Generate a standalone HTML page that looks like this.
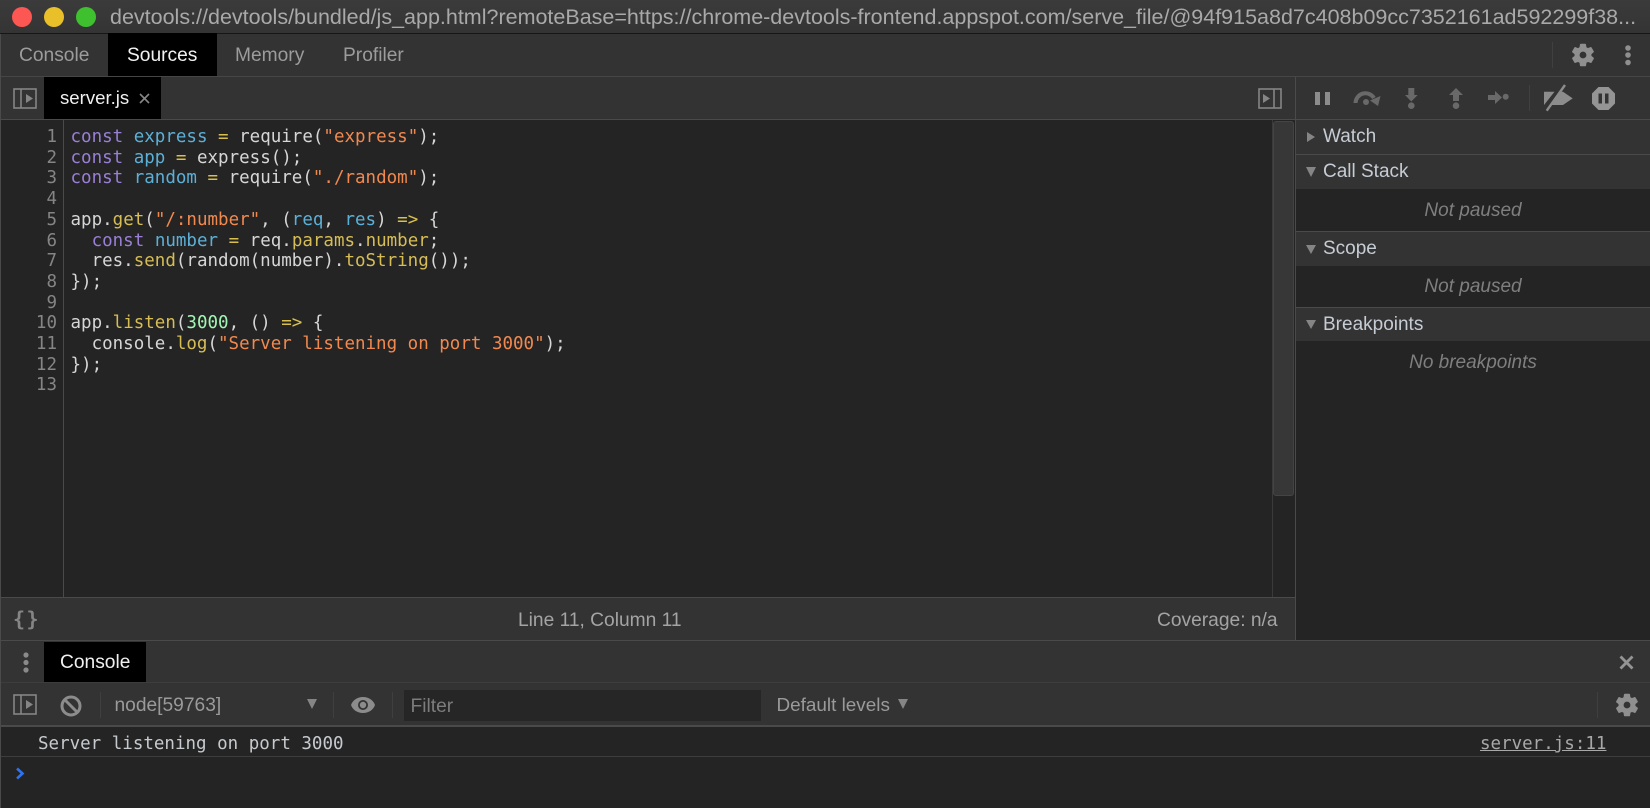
<!DOCTYPE html>
<html><head><meta charset="utf-8"><style>
html,body{margin:0;padding:0;width:1650px;height:808px;overflow:hidden;background:#242424}
body{position:relative;font-family:"Liberation Sans",sans-serif}
.a{position:absolute;white-space:pre}
.r{position:absolute}
.m{font-family:"DejaVu Sans Mono","Liberation Mono",monospace}
.h{color:#c6ccd4;font-size:19px;left:1323px;line-height:34px}
.e{color:#7f7f7f;font-size:19px;font-style:italic;left:1296px;width:354px;text-align:center;line-height:24px}
.k{color:#9a7fd6}.v{color:#5cb0d8}.o{color:#d8c04e}.s{color:#f1894f}.f{color:#d6bd55}.n{color:#a3f5b4}
#code{left:70.5px;top:127px;font-size:17.5px;line-height:20.7px;color:#d6d6d6}
#nums{left:0;width:57px;top:127px;font-size:17.5px;line-height:20.7px;color:#858585;text-align:right}
svg{position:absolute;overflow:visible}
</style></head><body>
<!-- title bar -->
<div class="r" style="left:0;top:0;width:1650px;height:33px;background:linear-gradient(#3b3b3b,#343434)"></div>
<div class="r" style="left:0;top:33px;width:1650px;height:1px;background:#161616"></div>
<div class="r" style="left:12px;top:7px;width:20px;height:20px;border-radius:50%;background:#fc5753"></div>
<div class="r" style="left:44px;top:7px;width:20px;height:20px;border-radius:50%;background:#e9c02a"></div>
<div class="r" style="left:76px;top:7px;width:20px;height:20px;border-radius:50%;background:#3fc02f"></div>
<div class="a" style="left:110px;top:3px;font-size:21.5px;line-height:28px;color:#a9a9a9;width:1530px;overflow:hidden">devtools://devtools/bundled/js_app.html?remoteBase=https://chrome-devtools-frontend.appspot.com/serve_file/@94f915a8d7c408b09cc7352161ad592299f38...</div>
<!-- main tabs -->
<div class="r" style="left:0;top:34px;width:1650px;height:42px;background:#333"></div>
<div class="r" style="left:108px;top:33px;width:109px;height:43px;background:#000"></div>
<div class="a" style="left:19px;top:44px;font-size:19.2px;line-height:24px;color:#9c9c9c">Console</div>
<div class="a" style="left:127px;top:44px;font-size:19.2px;line-height:24px;color:#f2f2f2">Sources</div>
<div class="a" style="left:235px;top:44px;font-size:19.2px;line-height:24px;color:#9c9c9c">Memory</div>
<div class="a" style="left:343px;top:44px;font-size:19.2px;line-height:24px;color:#9c9c9c">Profiler</div>
<div class="r" style="left:1552px;top:42px;width:1px;height:26px;background:#404040"></div>
<svg style="left:1569.5px;top:42px" width="26" height="26" viewBox="0 0 24 24"><path fill="#8f8f8f" stroke="#8f8f8f" stroke-width=".7" d="M19.4 13c.04-.32.07-.66.07-1s-.03-.68-.07-1l2.1-1.65c.2-.15.25-.42.12-.64l-2-3.46c-.12-.22-.39-.3-.61-.22l-2.49 1c-.52-.4-1.08-.73-1.69-.98l-.38-2.65A.49.49 0 0 0 14 2h-4c-.25 0-.46.18-.49.42l-.38 2.65c-.61.25-1.17.59-1.69.98l-2.49-1c-.23-.09-.49 0-.61.22l-2 3.46c-.13.22-.07.49.12.64L4.57 11c-.04.32-.07.65-.07 1s.03.68.07 1l-2.11 1.65c-.19.15-.24.42-.12.64l2 3.46c.12.22.39.3.61.22l2.49-1c.52.4 1.08.73 1.69.98l.38 2.65c.03.24.24.42.49.42h4c.25 0 .46-.18.49-.42l.38-2.65c.61-.25 1.17-.59 1.69-.98l2.49 1c.23.09.49 0 .61-.22l2-3.46c.12-.22.07-.49-.12-.64L19.4 13zM12 15.5a3.5 3.5 0 1 1 0-7 3.5 3.5 0 0 1 0 7z"/></svg>
<svg style="left:1622px;top:44px" width="12" height="24"><circle cx="6" cy="4" r="2.8" fill="#8f8f8f"/><circle cx="6" cy="11" r="2.8" fill="#8f8f8f"/><circle cx="6" cy="18.5" r="2.8" fill="#8f8f8f"/></svg>
<div class="r" style="left:0;top:76px;width:1650px;height:1px;background:#464646"></div>
<!-- file tab row -->
<div class="r" style="left:0;top:77px;width:1295px;height:42px;background:#333"></div>
<div class="r" style="left:44px;top:77px;width:117px;height:42px;background:#000"></div>
<svg style="left:12.5px;top:88px" width="24" height="21"><rect x="1" y="1" width="22" height="19" fill="none" stroke="#858585" stroke-width="1.6"/><path d="M8 1v19" stroke="#858585" stroke-width="1.6"/><path d="M13 6l7 4.5-7 4.5z" fill="#858585"/></svg>
<div class="a" style="left:60px;top:86px;font-size:18.6px;line-height:24px;color:#f0f0f0">server.js</div>
<svg style="left:139px;top:93px" width="11" height="11"><path d="M1 1l9 9M10 1l-9 9" stroke="#858585" stroke-width="1.6"/></svg>
<svg style="left:1257.5px;top:88px" width="24" height="21"><rect x="1" y="1" width="22" height="19" fill="none" stroke="#858585" stroke-width="1.6"/><path d="M16 1v19" stroke="#858585" stroke-width="1.6"/><path d="M5 6l7 4.5-7 4.5z" fill="#858585"/></svg>
<div class="r" style="left:0;top:119px;width:1650px;height:1px;background:#4a4a4a"></div>
<!-- editor -->
<div class="r" style="left:0;top:120px;width:1295px;height:478px;background:#242424"></div>
<div class="r" style="left:63px;top:120px;width:1px;height:478px;background:#4a4a4a"></div>
<div class="r" style="left:1272px;top:120px;width:1px;height:478px;background:#3a3a3a"></div>
<div class="r" style="left:1273px;top:121px;width:21px;height:375px;background:#373737;border-radius:3px;border:1px solid #444;box-sizing:border-box"></div>
<div class="a m" id="nums">1
2
3
4
5
6
7
8
9
10
11
12
13</div>
<div class="a m" id="code"><span class="k">const</span> <span class="v">express</span> <span class="o">=</span> require(<span class="s">"express"</span>);
<span class="k">const</span> <span class="v">app</span> <span class="o">=</span> express();
<span class="k">const</span> <span class="v">random</span> <span class="o">=</span> require(<span class="s">"./random"</span>);

app.<span class="f">get</span>(<span class="s">"/:number"</span>, (<span class="v">req</span>, <span class="v">res</span>) <span class="o">=&gt;</span> {
  <span class="k">const</span> <span class="v">number</span> <span class="o">=</span> req.<span class="f">params</span>.<span class="f">number</span>;
  res.<span class="f">send</span>(random(number).<span class="f">toString</span>());
});

app.<span class="f">listen</span>(<span class="n">3000</span>, () <span class="o">=&gt;</span> {
  console.<span class="f">log</span>(<span class="s">"Server listening on port 3000"</span>);
});
</div>
<!-- status bar -->
<div class="r" style="left:0;top:597px;width:1295px;height:1px;background:#4a4a4a"></div>
<div class="r" style="left:0;top:598px;width:1295px;height:42px;background:#333"></div>
<div class="a m" style="left:13px;top:607px;font-size:20px;line-height:24px;color:#858585;font-weight:bold;letter-spacing:1.5px">{}</div>
<div class="a" style="left:518px;top:609px;font-size:19.2px;line-height:24px;color:#a4a4a4">Line 11, Column 11</div>
<div class="a" style="left:1157px;top:609px;font-size:19.2px;line-height:24px;color:#a4a4a4">Coverage: n/a</div>
<!-- right pane -->
<div class="r" style="left:1295px;top:77px;width:1px;height:563px;background:#4a4a4a"></div>
<div class="r" style="left:1296px;top:77px;width:354px;height:42px;background:#333"></div>
<svg style="left:1315px;top:92px" width="15" height="13"><path d="M0 0h5v13H0zM10 0h5v13H10z" fill="#8c8c8c"/></svg>
<svg style="left:1353px;top:90px" width="28" height="16"><path d="M2.500 13A10 10 0 0 1 21 8" fill="none" stroke="#696969" stroke-width="4"/><path d="M27.500 6l-2.500 10-8-5.500z" fill="#696969"/><circle cx="13" cy="12" r="3" fill="#696969"/></svg>
<svg style="left:1405px;top:88px" width="13" height="21"><path d="M3.300 0h6v7h3.400L6.300 13.500 0 7h3.300z" fill="#696969"/><circle cx="6.300" cy="17.700" r="3.300" fill="#696969"/></svg>
<svg style="left:1449px;top:88px" width="14" height="21"><path d="M4 13h6V7h4L7 0 0 7h4z" fill="#696969"/><circle cx="7" cy="17.700" r="3.300" fill="#696969"/></svg>
<svg style="left:1488px;top:90px" width="21" height="14"><path d="M0 5h7V1l7 6.500-7 6.500v-4H0z" fill="#696969"/><circle cx="17.700" cy="6.700" r="3" fill="#696969"/></svg>
<div class="r" style="left:1529px;top:85px;width:1px;height:26px;background:#404040"></div>
<svg style="left:1544px;top:85px" width="29" height="26"><path d="M0 6.700h19l9.700 6.700L19 20H0z" fill="#8c8c8c"/><path d="M0 24L19 0" stroke="#333" stroke-width="5"/><path d="M2.700 25.700L21 0" stroke="#8c8c8c" stroke-width="2.400"/></svg>
<svg style="left:1592px;top:87px" width="23" height="23"><path d="M6.500 0h10L23 6.500v10L16.500 23h-10L0 16.500v-10z" fill="#949494"/><path d="M6.500 6.500h3.500v10H6.500zM13 6.500h3.500v10H13z" fill="#333"/></svg>
<div class="r" style="left:1296px;top:120px;width:354px;height:34px;background:#333"></div>
<div class="r" style="left:1296px;top:154px;width:354px;height:1px;background:#4a4a4a"></div>
<div class="r" style="left:1296px;top:155px;width:354px;height:34px;background:#333"></div>
<div class="r" style="left:1296px;top:231px;width:354px;height:1px;background:#4a4a4a"></div>
<div class="r" style="left:1296px;top:232px;width:354px;height:34px;background:#333"></div>
<div class="r" style="left:1296px;top:307px;width:354px;height:1px;background:#4a4a4a"></div>
<div class="r" style="left:1296px;top:308px;width:354px;height:33px;background:#333"></div>
<svg style="left:1307px;top:132px" width="8" height="10"><path d="M0 0l8 5-8 5z" fill="#858585"/></svg>
<svg style="left:1306px;top:167px" width="10" height="10"><path d="M0 0h10L5 10z" fill="#858585"/></svg>
<svg style="left:1306px;top:245px" width="10" height="9"><path d="M0 0h10L5 9z" fill="#858585"/></svg>
<svg style="left:1306px;top:320px" width="10" height="9"><path d="M0 0h10L5 9z" fill="#858585"/></svg>
<div class="a h" style="top:120px">Watch</div>
<div class="a h" style="top:155px">Call Stack</div>
<div class="a h" style="top:232px">Scope</div>
<div class="a h" style="top:308px">Breakpoints</div>
<div class="a e" style="top:199px">Not paused</div>
<div class="a e" style="top:275px">Not paused</div>
<div class="a e" style="top:351px">No breakpoints</div>
<!-- drawer -->
<div class="r" style="left:0;top:640px;width:1650px;height:1px;background:#4a4a4a"></div>
<div class="r" style="left:0;top:641px;width:1650px;height:42px;background:#333"></div>
<div class="r" style="left:44px;top:642px;width:102px;height:40px;background:#000"></div>
<svg style="left:20px;top:652px" width="12" height="24"><circle cx="6" cy="3" r="2.600" fill="#8a8a8a"/><circle cx="6" cy="10.500" r="2.600" fill="#8a8a8a"/><circle cx="6" cy="18" r="2.600" fill="#8a8a8a"/></svg>
<div class="a" style="left:60px;top:651px;font-size:19.2px;line-height:24px;color:#f0f0f0">Console</div>
<svg style="left:1619px;top:655px" width="15" height="15"><path d="M1.500 1.500l12 12M13.500 1.500l-12 12" stroke="#949494" stroke-width="2.800"/></svg>
<div class="r" style="left:0;top:682px;width:1650px;height:1px;background:#3d3d3d"></div>
<div class="r" style="left:0;top:683px;width:1650px;height:42px;background:#333"></div>
<svg style="left:12.5px;top:694px" width="24" height="21"><rect x="1" y="1" width="22" height="19" fill="none" stroke="#858585" stroke-width="1.600"/><path d="M8 1v19" stroke="#858585" stroke-width="1.600"/><path d="M13 6l7 4.500-7 4.500z" fill="#858585"/></svg>
<svg style="left:60px;top:695px" width="22" height="22"><circle cx="11" cy="11" r="9" fill="none" stroke="#8c8c8c" stroke-width="3"/><path d="M5 5l12 12" stroke="#8c8c8c" stroke-width="3"/></svg>
<div class="r" style="left:100px;top:692px;width:1px;height:26px;background:#3f3f3f"></div>
<div class="a" style="left:114.500px;top:694px;font-size:19.2px;line-height:24px;color:#9a9a9a">node[59763]</div>
<svg style="left:307px;top:699px" width="10" height="10"><path d="M0 0h10L5 10z" fill="#858585"/></svg>
<div class="r" style="left:333px;top:692px;width:1px;height:26px;background:#3f3f3f"></div>
<svg style="left:350px;top:696px" width="26" height="18"><path d="M13 1C7 1 2.500 4.500 1 9c1.500 4.500 6 8 12 8s10.500-3.500 12-8c-1.500-4.500-6-8-12-8z" fill="#8c8c8c"/><circle cx="13" cy="9" r="5" fill="#333"/><circle cx="13" cy="9" r="3.200" fill="#8c8c8c"/></svg>
<div class="r" style="left:392px;top:692px;width:1px;height:26px;background:#3f3f3f"></div>
<div class="r" style="left:404px;top:690px;width:357px;height:31px;background:#262626"></div>
<div class="a" style="left:410.500px;top:695px;font-size:19.2px;line-height:24px;color:#7c7c7c">Filter</div>
<div class="a" style="left:776.500px;top:694px;font-size:18.9px;line-height:24px;color:#9a9a9a">Default levels</div>
<svg style="left:898px;top:699px" width="10" height="10"><path d="M0 0h10L5 10z" fill="#858585"/></svg>
<div class="r" style="left:1597px;top:692px;width:1px;height:26px;background:#3f3f3f"></div>
<svg style="left:1614px;top:691.500px" width="26" height="26" viewBox="0 0 24 24"><path fill="#8f8f8f" stroke="#8f8f8f" stroke-width=".7" d="M19.4 13c.04-.32.07-.66.07-1s-.03-.68-.07-1l2.1-1.65c.2-.15.25-.42.12-.64l-2-3.46c-.12-.22-.39-.3-.61-.22l-2.49 1c-.52-.4-1.08-.73-1.69-.98l-.38-2.65A.49.49 0 0 0 14 2h-4c-.25 0-.46.18-.49.42l-.38 2.65c-.61.25-1.17.59-1.69.98l-2.49-1c-.23-.09-.49 0-.61.22l-2 3.46c-.13.22-.07.49.12.64L4.57 11c-.04.32-.07.65-.07 1s.03.68.07 1l-2.11 1.65c-.19.15-.24.42-.12.64l2 3.46c.12.22.39.3.61.22l2.49-1c.52.4 1.08.73 1.69.98l.38 2.65c.03.24.24.42.49.42h4c.25 0 .46-.18.49-.42l.38-2.65c.61-.25 1.17-.59 1.69-.98l2.49 1c.23.09.49 0 .61-.22l2-3.46c.12-.22.07-.49-.12-.64L19.4 13zM12 15.500a3.500 3.500 0 1 1 0-7 3.500 3.500 0 0 1 0 7z"/></svg>
<div class="r" style="left:0;top:725px;width:1650px;height:2px;background:#4a4a4a"></div>
<!-- console -->
<div class="a m" style="left:38px;top:733px;font-size:17.500px;line-height:22px;color:#c6cace">Server listening on port 3000</div>
<div class="a m" style="left:1480px;top:733px;font-size:17.500px;line-height:22px;color:#a8a8a8;text-decoration:underline">server.js:11</div>
<div class="r" style="left:0;top:756px;width:1650px;height:1px;background:#3d3d3d"></div>
<svg style="left:15px;top:767px" width="10" height="13"><path d="M2 1.500l5.500 5-5.500 5" fill="none" stroke="#2f72ea" stroke-width="2.600"/></svg>
<div class="r" style="left:0;top:34px;width:1px;height:774px;background:#4a4a4a"></div>
</body></html>
